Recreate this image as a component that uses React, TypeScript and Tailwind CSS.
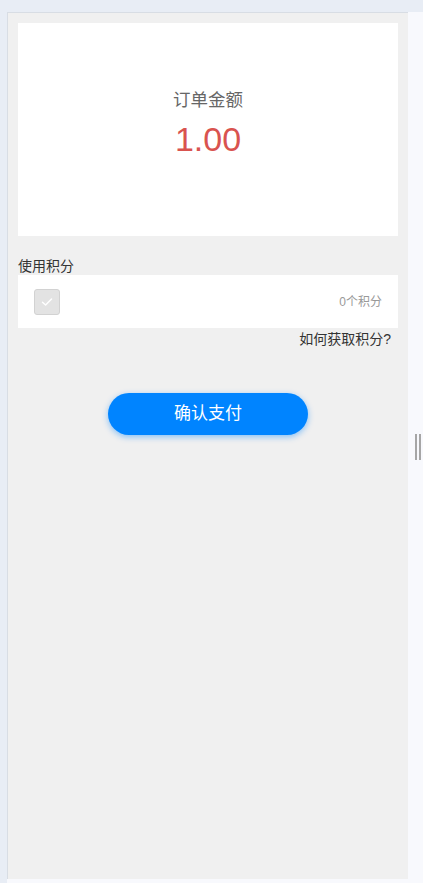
import React from "react";

export default function App() {
  return (
    <div
      className="w-[423px] h-[883px] bg-[#e8edf5] flex flex-col overflow-hidden"
      style={{ fontFamily: '"Liberation Sans", "Noto Sans CJK SC", sans-serif' }}
    >
      <div className="h-[12px] shrink-0" />
      <div className="flex flex-1 min-h-0">
        <div className="w-[7px] shrink-0" />
        <div className="flex-1 flex flex-col bg-[#f8f9fd]">
          <div className="flex h-[867px]">
            <div className="w-[401px] border-l border-t border-[#d8dde4] bg-[#f0f0f0] px-[10px] pt-[10px] flex flex-col">
              <div className="bg-white h-[213px] flex flex-col items-center justify-center">
                <div className="text-[17.5px] text-[#666] leading-[20px] mt-[-10px]">订单金额</div>
                <div className="text-[34px] text-[#d9534f] leading-[40px] mt-[9px]">1.00</div>
              </div>
              <div className="text-[14px] text-[#333] leading-[16px] mt-[22px]">使用积分</div>
              <div className="bg-white h-[53px] mt-[1px] flex items-center justify-between pl-[16px] pr-[16px]">
                <div className="w-[26px] h-[26px] rounded-[3px] bg-[#e3e3e3] border border-[#d2d2d2] flex items-center justify-center">
                  <svg width="14" height="14" viewBox="0 0 14 14" fill="none">
                    <path d="M2.5 7.2 L5.6 10 L11.5 4" stroke="white" strokeWidth="1.5" strokeLinecap="round" strokeLinejoin="round" />
                  </svg>
                </div>
                <div className="text-[12px] text-[#999]">0个积分</div>
              </div>
              <div className="flex justify-end pr-[7px] mt-[2px]">
                <span className="text-[14px] text-[#333] leading-[18px]">如何获取积分?</span>
              </div>
              <div className="flex justify-center mt-[45px]">
                <button className="w-[200px] h-[42px] rounded-full bg-[#0084ff] text-white text-[17px] shadow-[0_2px_6px_rgba(0,132,255,0.45)]">
                  确认支付
                </button>
              </div>
            </div>
            <div className="flex-1 relative">
              <div className="absolute left-[7px] top-[422px] w-[2px] h-[26px] bg-[#a6a6a6]" />
              <div className="absolute left-[11px] top-[422px] w-[2px] h-[26px] bg-[#a6a6a6]" />
            </div>
          </div>
        </div>
      </div>
    </div>
  );
}
